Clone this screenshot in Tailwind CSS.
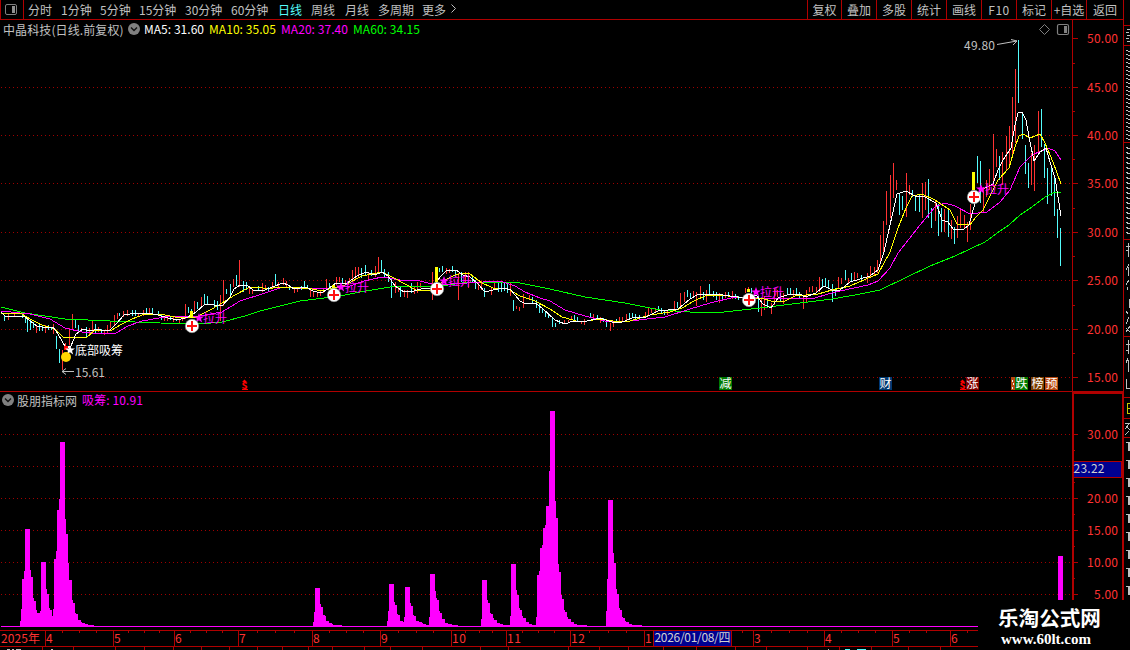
<!DOCTYPE html>
<html lang="zh-CN">
<head>
  <meta charset="UTF-8">
  <meta name="viewport" content="width=device-width, initial-scale=1.0">
  <title>中晶科技 日线</title>
  <script src="https://cdn.jsdelivr.net/npm/@tailwindcss/browser@4"></script>
</head>
<body class="bg-black w-[1130px] h-[650px] overflow-hidden relative font-['Noto_Sans_CJK_SC','Liberation_Sans',sans-serif] text-[12px] text-[#c0c0c0]">
  <div class="flex h-full">
    <div class="w-[1124px] shrink-0 flex flex-col border-r border-[#b00000]">

      <!-- Toolbar -->
      <header class="h-5 flex border-b border-[#b00000] leading-[19px] whitespace-nowrap">
        <div class="w-6 border-x border-[#b00000] flex items-center pl-[4px]">
          <svg class="w-[13px] h-[11px]" viewBox="0 0 13 11"><rect x=".5" y=".5" width="11" height="10" rx="1.5" fill="none" stroke="#808080"/><rect x="7" y="2" width="3" height="7" fill="#909090"/></svg>
        </div>
        <nav class="flex flex-1 pl-1">
          <span class="w-[33px]">分时</span>
          <span class="w-[39px]">1分钟</span>
          <span class="w-[39px]">5分钟</span>
          <span class="w-[46px]">15分钟</span>
          <span class="w-[46px]">30分钟</span>
          <span class="w-[47px]">60分钟</span>
          <span class="w-[33px] text-[#54fcfc]">日线</span>
          <span class="w-[34px]">周线</span>
          <span class="w-[33px]">月线</span>
          <span class="w-[44px]">多周期</span>
          <span class="w-[28px]">更多</span>
          <svg class="w-2 h-[9px] mt-[4px]" viewBox="0 0 8 9" fill="none" stroke="#c0c0c0"><path d="M1.5 .5l4 4l-4 4"/></svg>
        </nav>
        <div class="flex text-center *:border-l *:border-[#b00000]">
          <span class="w-[34px]">复权</span>
          <span class="w-[35px]">叠加</span>
          <span class="w-[35px]">多股</span>
          <span class="w-[35px]">统计</span>
          <span class="w-[35px]">画线</span>
          <span class="w-[35px] tracking-[.5px]">F10</span>
          <span class="w-[35px]">标记</span>
          <span class="w-[35px]">+自选</span>
          <span class="w-[37px]">返回</span>
        </div>
      </header>

      <!-- Price chart -->
      <section class="h-[372px] flex border-b border-[#b00000]">
        <div class="w-[1072px]">
          <div class="h-[19px] flex leading-[19px] whitespace-nowrap pl-[3px]">
            <span class="w-[125px] tracking-[.1px]">中晶科技(日线.前复权)</span>
            <svg class="w-3 h-3 mt-[3px] mr-1" viewBox="0 0 12 12"><circle cx="6" cy="6" r="6" fill="#808080"/><path d="M3 4.5l3 3l3-3" fill="none" stroke="#111" stroke-width="1.4"/></svg>
            <svg class="w-[280px] h-[19px]" viewBox="0 0 280 19" font-size="12">
              <text x="0" y="14" textLength="60" fill="#ffffff">MA5: 31.60</text>
              <text x="65" y="14" textLength="67" fill="#ffff00">MA10: 35.05</text>
              <text x="137" y="14" textLength="67" fill="#ff00ff">MA20: 37.40</text>
              <text x="209" y="14" textLength="67" fill="#00ff00">MA60: 34.15</text>
            </svg>
            <svg class="ml-auto w-[33px] h-[13px] mt-[3px]" viewBox="0 0 33 13" fill="none" stroke="#808080"><path d="M.5 6.5l5-5l5 5l-5 5z"/><rect x="18.5" y="1.5" width="11" height="10" rx="1.5" stroke-width="1.2"/><path d="M26.5 3v7" stroke-width="3"/></svg>
          </div>
          <svg class="w-[1072px] h-[352px]" viewBox="0 39 1072 352" fill="none">
            <g stroke="#a00000" stroke-dasharray="1 3"><path d="M1 87.5H1072M1 135.5H1072M1 183.5H1072M1 232.5H1072M1 280.5H1072M1 329.5H1072M1 377.5H1072"/></g>
            <path id="up" stroke="#ff3232" shape-rendering="crispEdges"/>
            <path id="down" stroke="#54fcfc" shape-rendering="crispEdges"/>
            <g shape-rendering="crispEdges">
              <polyline stroke="#00ff00" points="1,307 25,313 65,319 110,321 160,323 200,324 222,322 245,316 260,311 272,308 300,301 340,296 360,292 390,287 420,286 440,286 470,282 520,283 550,289 585,297 625,303 660,310 690,312 724,312 760,308 800,303 832,299 855,295 880,290 905,278 930,266 955,256 970,249 985,242 1000,231 1009,225 1020,215 1032,207 1045,197 1053,193 1061,192"/>
              <polyline stroke="#ff00ff" points="1,311 30,314 50,319 65,328 82,332 100,334 116,333 128,326 142,321 165,317 200,316 222,312 240,301 265,293 283,287 300,288 325,289 350,286 364,281 382,277 400,280 420,281 432,284 450,284 500,281 515,286 525,292 540,298 550,301 565,310 585,316 605,321 630,321 665,317 690,309 710,303 735,297 757,298 780,299 815,298 828,294 840,291 868,285 878,281 890,268 898,253 920,225 935,207 945,203 955,206 970,214 987,212 1000,202 1010,190 1020,167 1032,155 1048,148 1055,151 1061,160"/>
              <polyline stroke="#ffff00" points="1,313 22,314 30,319 42,325 55,329 63,337 86,338 94,331 112,330 120,325 132,319 145,314 165,315 180,318 196,317 212,309 222,303 235,295 248,288 258,287 268,289 279,287 290,287 312,289 322,291 333,288 345,285 362,276 382,272 394,278 405,284 416,290 432,290 445,280 455,275 463,273 470,274 482,283 493,288 508,289 520,296 535,301 550,309 562,317 580,322 600,319 613,321 630,321 650,315 670,312 682,308 694,301 705,296 720,295 745,298 760,298 775,302 785,301 795,296 818,294 832,290 850,286 866,279 878,274 890,252 898,228 906,208 912,196 922,194 935,200 950,210 957,224 970,225 975,218 983,210 990,196 998,180 1009,168 1015,147 1019,136 1023,134 1030,138 1040,134 1045,143 1053,162 1061,184"/>
              <polyline stroke="#ffffff" points="1,312 5,316 24,316 30,321 37,326 42,327 53,327 58,334 66,348 71,346 76,334 83,329 90,331 98,329 104,331 110,330 116,324 124,315 130,314 148,313 158,315 168,318 178,320 188,317 196,312 204,305 210,304 218,306 223,305 230,297 234,289 240,285 247,285 253,290 265,290 272,287 283,283 288,285 294,289 306,287 313,291 321,293 328,289 336,283 347,283 357,276 366,272 375,275 382,272 388,276 395,286 404,292 414,291 424,288 433,288 440,277 447,270 456,270 463,275 470,277 478,284 485,292 493,290 504,288 511,290 520,301 526,304 535,303 542,308 555,320 565,324 573,321 587,321 600,318 612,322 620,323 632,318 646,317 658,311 678,309 690,299 697,295 716,294 730,296 745,298 756,295 763,304 771,308 778,298 790,294 800,294 805,297 816,293 824,286 832,290 840,290 850,282 860,279 870,276 878,270 884,252 890,225 897,194 906,191 915,196 925,197 936,203 942,220 948,222 953,229 964,229 969,225 975,203 981,190 993,184 998,170 1003,160 1011,148 1015,125 1018,113 1022,112 1026,120 1029,137 1034,161 1040,152 1046,148 1050,162 1055,178 1061,216"/>
            </g>

            <!-- signal bars and markers -->
            <path d="M191.5 311v7M333.5 285v5M436.5 267v15M748.5 289v3M973.5 172v18" stroke="#ffff00" stroke-width="3"/>
            <defs>
              <g id="plus"><circle r="6.7" fill="#fff" stroke="#999" stroke-width=".6"/><path d="M-5 0h10M0-5v10" stroke="#ff1010" stroke-width="2"/></g>
              <path id="star" d="M0-5l1.3 3.4h3.7l-3 2.3l1.2 3.8l-3.2-2.3l-3.2 2.3l1.2-3.8l-3-2.3h3.7z"/>
              <g id="lift" fill="#ff00ff"><use href="#star"/><text x="4" y="4.5" textLength="24" font-size="12">拉升</text></g>
            </defs>
            <use href="#lift" x="199" y="318"/><use href="#lift" x="341" y="287"/><use href="#lift" x="444" y="281"/><use href="#lift" x="756" y="292"/><use href="#lift" x="981" y="189"/>
            <use href="#plus" x="192" y="326"/><use href="#plus" x="334" y="295"/><use href="#plus" x="437" y="289"/><use href="#plus" x="749" y="300"/><use href="#plus" x="974" y="197"/>
            <path d="M64 346h4v4h-4z" fill="#f00"/>
            <use href="#star" x="70" y="350" fill="#fff"/>
            <circle cx="66" cy="357" r="5" fill="#ffd800"/>
            <text x="75" y="354.500" textLength="48" fill="#fff" font-size="12">底部吸筹</text>
            <path d="M74 371.500H62M66 368.500l-4 3l4 3" stroke="#c0c0c0"/>
            <text x="75" y="377" textLength="30" fill="#c0c0c0" font-size="12">15.61</text>
            <text x="964" y="50" textLength="31" fill="#c0c0c0" font-size="12">49.80</text>
            <path d="M997 44.500L1017 41M1011 39.500l6 1.500l-4 4" stroke="#c0c0c0"/>

            <!-- event tags -->
            <g fill="#f00" font-weight="bold" font-size="12"><text x="241.500" y="389">s</text><text x="959.500" y="389">s</text><path d="M242 382l2.500-2.500l2.500 2.500zM960 382l2.500-2.500l2.500 2.500zM242 389h6v1h-6zM960 389h6v1h-6z"/></g>
            <path fill="#007a00" d="M719 377h13v13h-13zM1015 377h13v13h-13z"/>
            <path fill="#003870" d="M879 377h13v13h-13z"/>
            <path fill="#800000" d="M966 377h13v13h-13z"/>
            <path fill="#7a3c00" d="M1031 377h13v13h-13z"/>
            <path fill="#b84810" d="M1045 377h13v13h-13zM1011 377h4v13h-4z"/>
            <path d="M1012.500 380v2M1013.500 383v2M1012.500 387v2" stroke="#eee"/>
            <g fill="#fff" font-size="12"><text x="719.500" y="388">减</text><text x="879.500" y="388">财</text><text x="966.500" y="388">涨</text><text x="1015.500" y="388">跌</text><text x="1031.500" y="388">榜</text><text x="1045.500" y="388">预</text></g>
          </svg>
        </div>
        <svg class="w-[51px] h-[371px]" viewBox="1072 20 51 371">
          <path shape-rendering="crispEdges" stroke="#b00000" d="M1072.500 20V391M1073 38.500h5M1073 87.500h5M1073 135.500h5M1073 183.500h5M1073 232.500h5M1073 280.500h5M1073 329.500h5M1073 377.500h5M1073 63.500h2M1073 111.500h2M1073 159.500h2M1073 208.500h2M1073 256.500h2M1073 305.500h2M1073 353.500h2"/>
          <g fill="#ff3232" font-size="12">
            <text x="1087" y="43" textLength="31">50.00</text><text x="1087" y="92" textLength="31">45.00</text><text x="1087" y="140" textLength="31">40.00</text><text x="1087" y="188" textLength="31">35.00</text><text x="1087" y="237" textLength="31">30.00</text><text x="1087" y="285" textLength="31">25.00</text><text x="1087" y="334" textLength="31">20.00</text><text x="1087" y="382" textLength="31">15.00</text>
          </g>
        </svg>
      </section>

      <!-- Indicator panel -->
      <section class="h-[238px] flex">
        <div class="w-[1072px]">
          <div class="h-[18px] flex leading-[17px] whitespace-nowrap pl-[2px]">
            <svg class="w-3 h-3 mt-[2px] mr-[3px]" viewBox="0 0 12 12"><circle cx="6" cy="6" r="6" fill="#808080"/><path d="M3 4.500l3 3l3-3" fill="none" stroke="#111" stroke-width="1.400"/></svg>
            <span class="w-[65px]">股朋指标网</span>
            <svg class="w-[64px] h-[18px]" viewBox="0 0 64 18" font-size="12" fill="#ff00ff"><text x="0" y="12.500" textLength="61">吸筹: 10.91</text></svg>
          </div>
          <svg class="w-[1072px] h-[220px]" viewBox="0 410 1072 220">
            <path stroke="#a00000" stroke-dasharray="1 3" d="M1 434.500H1072M1 466.500H1072M1 498.500H1072M1 530.500H1072M1 562.500H1072M1 594.500H1072"/>
            <path id="hist" fill="#ff00ff" shape-rendering="crispEdges"/>
            <path fill="#ff00ff" shape-rendering="crispEdges" d="M1 626H980v1H1zM1058 556h5v60h-5z"/>
          </svg>
        </div>
        <svg class="w-[51px] h-[238px] overflow-visible" viewBox="1072 392 51 238">
          <path shape-rendering="crispEdges" fill="#b00000" d="M1072 392h52v2h-52zM1072 392h2v238h-2zM1122 392h2v238h-2z"/>
          <path shape-rendering="crispEdges" fill="none" stroke="#b00000" d="M1074 434.500h4M1074 498.500h4M1074 530.500h4M1074 562.500h4M1074 594.500h4M1074 450.500h1M1074 482.500h1M1074 514.500h1M1074 546.500h1M1074 578.500h1"/>
          <path shape-rendering="crispEdges" fill="#000090" stroke="#b00000" d="M1073.500 461.500h48v16h-48z"/>
          <text x="1073.500" y="473" textLength="31" fill="#d0d0d0" font-size="12">23.22</text>
          <g fill="#ff3232" font-size="12">
            <text x="1087" y="439" textLength="31">30.00</text><text x="1087" y="503" textLength="31">20.00</text><text x="1087" y="535" textLength="31">15.00</text><text x="1087" y="567" textLength="31">10.00</text><text x="1094" y="599" textLength="24">5.00</text>
          </g>
        </svg>
      </section>

      <!-- Time axis -->
      <svg class="w-[1123px] h-5" viewBox="0 630 1123 20">
        <path shape-rendering="crispEdges" fill="none" stroke="#b00000" d="M0 630.500H1123M0 646.500H1123M45.500 631v15M113.500 631v15M174.500 631v15M238.500 631v15M312.500 631v15M380.500 631v15M451.500 631v15M506.500 631v15M570.500 631v15M644.500 631v15M653.500 631v15M731.500 631v15M753.500 631v15M824.500 631v15M892.500 631v15M950.500 631v15"/>
        <path id="ticks" shape-rendering="crispEdges" fill="none" stroke="#b00000"/>
        <path fill="#000090" d="M654 631h77v15h-77z"/>
        <text x="654.500" y="642" textLength="76" fill="#d0d0d0" font-size="12">2026/01/08/四</text>
        <g fill="#ff3232" font-size="12">
          <text x="1" y="643" textLength="39">2025年</text><text x="46" y="643">4</text><text x="114" y="643">5</text><text x="175" y="643">6</text><text x="239" y="643">7</text><text x="313" y="643">8</text><text x="381" y="643">9</text><text x="452" y="643" textLength="14">10</text><text x="507" y="643" textLength="14">11</text><text x="571" y="643" textLength="14">12</text><text x="645" y="643">1</text><text x="754" y="643">3</text><text x="825" y="643">4</text><text x="893" y="643">5</text><text x="951" y="643">6</text>
        </g>
        <path fill="#c0c0c0" d="M7 649h3v1h-3zM12 649h2v1h-2zM16 649h5v1h-5zM51 649h2v1h-2zM828 649h1v1h-1z"/>
        <path fill="#54fcfc" d="M845 649h5v1h-5zM857 649h9v1h-9z"/>
      </svg>
    </div>

    <!-- Edge of the quote panel -->
    <svg class="w-[6px] h-[650px]" viewBox="1124 0 6 650" fill="none" shape-rendering="crispEdges">
      <path stroke="#b00000" d="M1124 25.500h6M1124 45.500h6M1124 142.500h6M1124 239.500h6M1124 336.500h6M1124 397.500h6M1124 418.500h6M1124 437.500h6"/>
      <path id="edge" stroke="#c0c0c0"/>
      <path stroke="#c0c0c0" d="M1126 246.500h4M1128.500 243v14M1126 250.500h3M1129 264l-3 6M1128.500 267v9M1129 280l-3 5M1127 290v-3M1129.500 299v9M1126 311l2 3M1129 317l-3 7M1126 328l4 4M1126 332l4-6M1126 344.500h4M1128.500 340v14M1126 350.500h3M1128 358l-2 5M1128.500 360v12M1126.500 379v9h3M1125 423.500h5M1129 424l-4 5M1126 426l4 4M1129 431l-4 4"/>
      <path stroke="#c8c800" d="M1130 403.500h-2.500v10h2.500M1128 408.500h2"/>
      <path id="ones" stroke="#c0c0c0"/>
    </svg>
  </div>

  <!-- Site badge -->
  <div class="absolute left-[978px] top-[600px] w-[152px] h-[50px] bg-black text-white font-bold pl-5 pt-[7px] whitespace-nowrap">
    <div class="text-[20.6px] leading-[24px] font-['Liberation_Sans','Noto_Sans_CJK_SC',sans-serif]">乐淘公式网</div>
    <div class="text-[15px] leading-[16px] pl-[3px] font-['Liberation_Serif',serif]">www.60lt.com</div>
  </div>

  <script>
    // x, high, low of each bar
    const up = [[8,313,320],[14,313,316],[36,325,333],[45,325,333],[53,324,334],[62,350,370],[65,343,347],[69,328,345],[72,314,329],[81,328,332],[89,328,335],[92,320,332],[98,327,332],[104,330,335],[107,325,333],[110,322,328],[114,315,326],[117,313,319],[123,311,317],[127,310,316],[138,313,317],[143,310,316],[149,308,315],[164,316,321],[167,317,321],[173,316,322],[179,319,323],[182,316,321],[185,304,319],[194,301,312],[201,297,308],[220,295,321],[223,280,306],[233,279,287],[239,260,287],[249,286,294],[252,289,294],[262,283,292],[265,285,290],[272,282,288],[278,282,288],[283,278,285],[286,281,287],[294,288,293],[297,288,292],[310,288,297],[313,292,297],[317,292,297],[320,290,296],[323,289,293],[326,279,290],[336,277,285],[339,277,282],[345,280,285],[349,278,283],[352,270,280],[355,267,280],[358,267,278],[368,272,280],[375,266,277],[378,257,273],[395,282,293],[398,286,292],[404,290,297],[407,290,298],[414,287,294],[417,282,293],[420,283,288],[432,272,300],[446,268,274],[449,269,273],[458,273,300],[465,272,282],[468,272,288],[478,282,290],[481,281,290],[491,288,295],[494,283,290],[510,283,296],[516,306,309],[519,307,311],[523,294,308],[529,295,300],[564,320,324],[568,320,323],[571,316,320],[581,321,324],[584,319,325],[593,314,318],[600,317,323],[610,323,331],[613,322,327],[619,317,322],[622,317,322],[626,314,321],[645,312,318],[648,308,315],[651,308,313],[655,308,313],[667,310,315],[674,301,310],[680,293,308],[684,292,302],[693,291,298],[696,292,306],[700,286,297],[706,290,302],[719,293,303],[725,292,298],[732,291,299],[745,288,293],[748,287,292],[761,298,316],[764,296,310],[771,303,314],[774,288,305],[777,290,297],[783,293,304],[793,290,297],[803,295,309],[806,290,302],[809,287,292],[812,286,292],[816,287,292],[819,277,292],[838,277,288],[841,278,284],[848,278,283],[854,272,280],[857,273,278],[867,273,283],[870,266,277],[874,267,275],[877,260,273],[880,235,263],[883,221,255],[886,191,225],[890,175,218],[893,163,198],[896,180,190],[906,173,217],[909,185,195],[922,183,218],[925,182,210],[935,200,221],[944,209,232],[951,220,239],[957,216,238],[960,209,228],[964,215,228],[967,222,242],[970,204,230],[983,187,213],[986,180,197],[989,169,190],[993,134,187],[996,149,167],[1002,152,185],[1006,136,170],[1009,126,165],[1012,97,155],[1015,69,143],[1031,153,185],[1034,145,191],[1038,111,152]];
    const down = [[4,315,321],[22,315,318],[25,317,323],[27,319,332],[30,320,330],[33,322,328],[39,323,331],[42,325,331],[48,325,330],[51,328,330],[56,336,349],[59,349,363],[75,320,328],[78,325,333],[86,327,337],[95,324,333],[101,329,333],[119,313,316],[132,310,316],[135,310,316],[146,308,313],[152,308,313],[158,311,315],[161,315,320],[170,317,320],[176,319,321],[188,307,313],[191,309,314],[197,302,309],[204,294,305],[207,296,305],[214,300,308],[217,301,310],[226,289,294],[230,284,297],[236,275,286],[243,281,292],[246,282,290],[258,286,291],[268,287,291],[275,274,285],[289,285,290],[301,286,290],[304,281,287],[307,285,289],[329,283,288],[342,278,283],[361,268,278],[365,265,275],[371,270,276],[381,260,273],[384,269,277],[388,272,282],[391,278,298],[400,286,297],[411,283,293],[439,268,272],[442,266,272],[452,266,272],[455,270,277],[461,272,282],[472,275,283],[475,280,289],[484,288,297],[498,282,292],[501,282,292],[504,283,291],[507,282,293],[513,300,311],[532,297,304],[536,300,308],[539,303,313],[542,308,313],[545,311,317],[548,313,318],[552,318,327],[555,323,327],[559,320,324],[574,315,320],[577,317,321],[590,313,318],[597,315,319],[603,318,322],[606,320,327],[616,319,323],[629,313,318],[632,313,317],[635,314,319],[639,315,320],[658,306,310],[661,308,313],[664,310,315],[677,302,308],[687,290,297],[690,293,298],[703,292,300],[709,284,295],[713,291,297],[716,292,300],[722,294,301],[728,292,297],[735,294,299],[738,296,300],[751,288,293],[758,296,312],[767,300,307],[780,293,302],[787,288,295],[790,288,295],[796,288,294],[799,292,298],[822,279,287],[825,278,286],[828,280,288],[832,284,302],[835,288,296],[845,270,280],[851,273,282],[861,275,280],[899,193,215],[902,196,210],[912,190,197],[915,195,211],[919,195,212],[928,179,218],[931,208,228],[938,204,236],[941,208,232],[948,210,237],[954,227,244],[977,156,183],[980,161,203],[999,156,180],[1018,40,103],[1022,113,139],[1025,145,174],[1028,163,188],[1041,109,147],[1044,144,178],[1047,168,204],[1051,166,196],[1054,178,216],[1057,209,238],[1060,228,266]];
    const bars = list => list.map(([x, a, b]) => `M${x + .5} ${a}V${b}`).join('');
    document.getElementById('up').setAttribute('d', bars(up));
    document.getElementById('down').setAttribute('d', bars(down));

    // histogram outline: left edge, top
    const steps = [[20,621],[21,609],[22,579],[24,571],[25,529],[30,570],[31,577],[33,598],[34,601],[36,610],[37,613],[40,611],[41,562],[46,589],[47,594],[49,608],[50,610],[52,616],[53,609],[54,559],[56,551],[57,510],[59,499],[60,442],[65,519],[66,534],[68,563],[69,580],[72,600],[73,603],[75,613],[76,614],[78,620],[81,622],[82,623],[85,624],[88,625],[94,626],
      [313,622],[314,612],[315,588],[320,604],[321,607],[323,615],[325,616],[326,621],[329,623],[332,624],[333,625],[342,626],
      [387,621],[388,611],[389,584],[394,602],[395,605],[397,614],[398,615],[400,621],[403,622],[404,617],[405,587],[410,603],[411,606],[413,615],[414,616],[416,621],[419,622],[422,623],[423,624],[426,625],[429,617],[430,574],[435,591],[436,598],[437,600],[439,611],[440,613],[442,619],[445,623],[448,624],[452,625],[458,626],
      [481,619],[482,580],[487,600],[488,603],[490,613],[491,614],[493,618],[494,620],[497,623],[500,624],[503,625],[510,616],[511,564],[516,590],[517,595],[519,608],[520,610],[522,616],[523,618],[526,622],[529,624],[532,625],[536,617],[537,575],[539,571],[540,548],[542,545],[543,528],[545,525],[546,506],[549,471],[550,411],[555,501],[556,518],[558,564],[559,572],[561,595],[562,599],[564,610],[565,612],[567,617],[568,619],[571,622],[574,624],[577,625],[587,626],
      [606,611],[607,579],[608,500],[613,553],[614,563],[616,589],[617,594],[619,608],[620,610],[622,617],[623,618],[625,621],[626,622],[629,624],[632,625],[642,626]];
    document.getElementById('hist').setAttribute('d', 'M20 627' + steps.map(([x, y]) => `H${x}V${y}`).join('') + 'V627z');

    const minor = [62,79,96,128,144,159,190,206,222,257,275,294,329,346,363,398,416,433,465,479,492,522,538,554,589,608,626,742,771,789,807,841,858,875,909,926,967];
    const lower = [42,73,115,144,173,201,229,257,282,308,332,364,390,422,480,508,568,599,628,663,696,735,766,807,839,871,908,940];
    document.getElementById('ticks').setAttribute('d',
      minor.map(x => `M${x + .5} 631v2`).join('') + lower.map(x => `M${x + .5} 647v3`).join(''));

    let edge = '';
    for (let y = 29; y < 43; y += 3) edge += `M${1126 + y % 2} ${y}.5h3`;
    for (let y = 50; y < 140; y += 4) edge += `M1126 ${y}.5h2M1128 ${y + 1}.5h2`;
    for (let y = 146; y < 236; y += 5) edge += `M1126 ${y + 1}.5h2M1127 ${y + 2}.5h3`;
    document.getElementById('edge').setAttribute('d', edge);
    let ones = '';
    for (let y = 442; y < 600; y += 18) ones += `M1126 ${y + .5}h4M1128.5 ${y}v9M1129.5 ${y}v9`;
    document.getElementById('ones').setAttribute('d', ones);
  </script>
</body>
</html>
